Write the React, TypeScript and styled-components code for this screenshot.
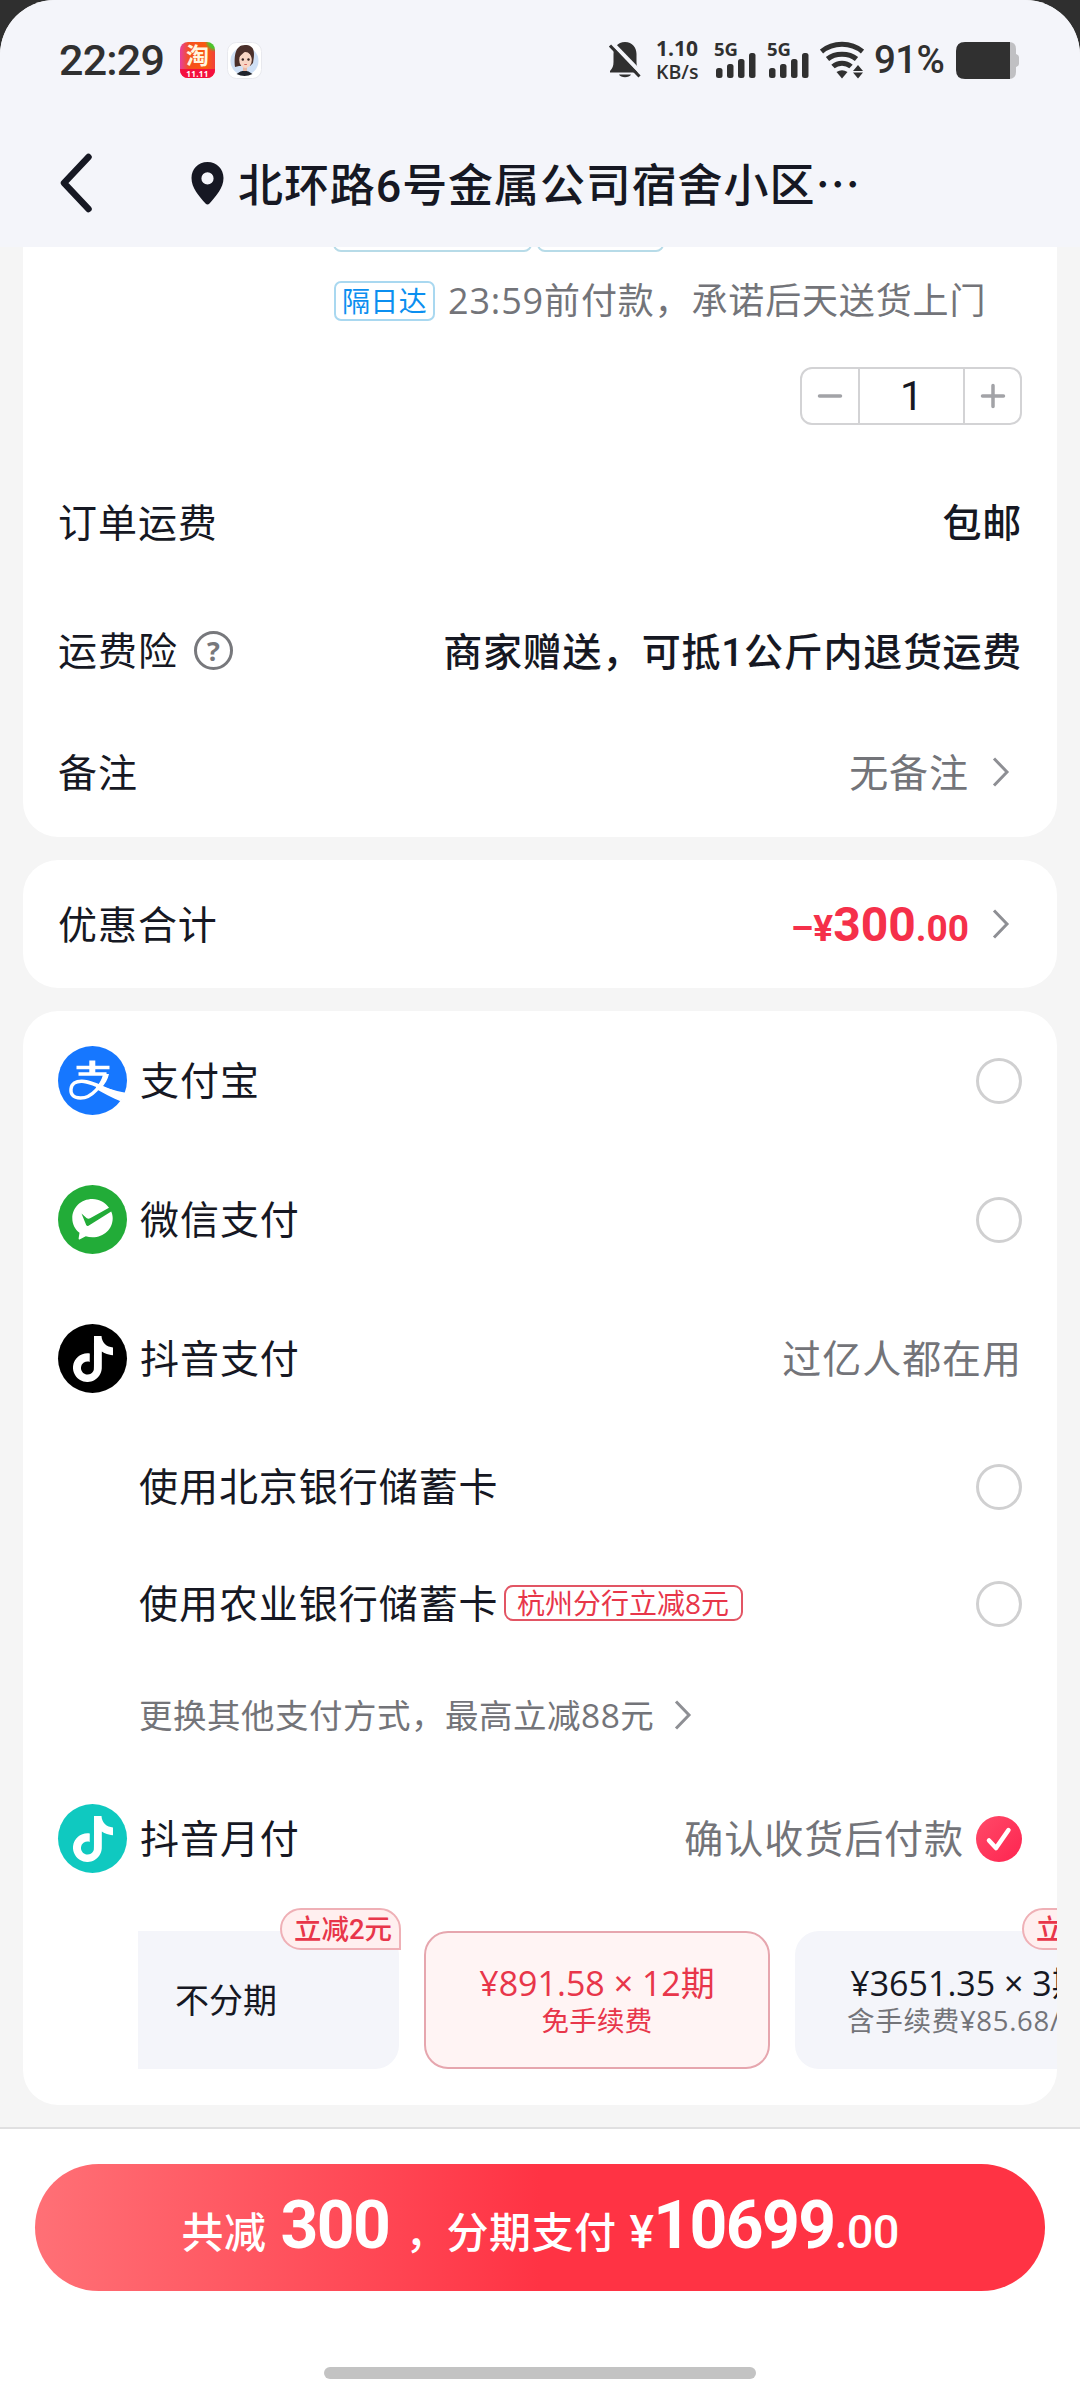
import React from 'react';
import styled, { createGlobalStyle } from 'styled-components';
import { SiTiktok } from 'react-icons/si';

const INK = '#161823';
const GREY = '#737479';
const RED = '#f5304a';

const Global = createGlobalStyle`
  * { box-sizing: border-box; }
  body { margin: 0; background: #2f2f2f; }
  #root { font-family: "Open Sans", "Noto Sans CJK SC", sans-serif; color: ${INK}; }
`;

const Screen = styled.div`
  width: 1080px;
  height: 2400px;
  display: flex;
  flex-direction: column;
  overflow: hidden;
  border-radius: 55px 55px 0 0;
  background: #f5f5f5;
`;

/* ---------- header ---------- */

const Header = styled.header`
  height: 247px;
  flex: none;
  display: flex;
  flex-direction: column;
  background: #f4f5fa;
`;

const StatusBar = styled.div`
  height: 119px;
  padding: 1px 60px 0 59px;
  display: flex;
  align-items: center;
  justify-content: space-between;
  color: #303030;
`;

const StatusGroup = styled.div`
  display: flex;
  align-items: center;
`;

const Clock = styled.span`
  font-family: Roboto, sans-serif;
  font-size: 43px;
  line-height: 48px;
  font-weight: 500;
  letter-spacing: -0.8px;
  width: 121px;
  white-space: nowrap;
`;

const ShopIcon = styled.div`
  width: 35px;
  height: 36px;
  margin-right: 12px;
  border-radius: 8px;
  display: flex;
  flex-direction: column;
  background: radial-gradient(circle at 100% 0, #4cc42c 0 12%, transparent 20%),
    linear-gradient(90deg, #e640a0 0, #f4501e 25%, #fb5a10 75%, #f0403a 100%);
  color: #fff6e0;
  font-size: 23px;
  font-weight: 700;
  line-height: 27px;
  text-align: center;
`;

const ShopStrip = styled.div`
  height: 9px;
  border-radius: 0 0 8px 8px;
  background: #f4103e;
  color: #fff;
  font-size: 8px;
  line-height: 9px;
  letter-spacing: 0.4px;
`;

const Speed = styled.div`
  width: 58px;
  margin-left: 14px;
  font-size: 21px;
  line-height: 23px;
  font-weight: 700;
  span { display: block; font-size: 19.5px; font-weight: 600; }
`;

const Signal = styled.div`
  width: 53px;
  height: 38px;
  display: flex;
  flex-direction: column;
  font-size: 18.5px;
  line-height: 15px;
  font-weight: 700;
  svg { margin-top: -6px; margin-left: 2px; }
`;

const Percent = styled.span`
  width: 82px;
  font-family: Roboto, sans-serif;
  font-size: 38.5px;
  line-height: 44px;
  font-weight: 500;
  letter-spacing: -0.6px;
  margin-left: 10px;
  white-space: nowrap;
`;

const TitleBar = styled.div`
  flex: 1;
  display: flex;
  align-items: center;
  padding: 0 60px;
`;

const Address = styled.div`
  display: flex;
  align-items: center;
  margin-left: 97px;
  gap: 14px;
  font-family: Roboto, "Noto Sans CJK SC", sans-serif;
  font-size: 45px;
  line-height: 60px;
  letter-spacing: 0.9px;
  font-weight: 500;
`;

const Dots = styled.span`
  font-family: "Noto Sans CJK SC", sans-serif;
`;

/* ---------- cards ---------- */

const Main = styled.main`
  flex: 1;
  padding: 0 23px;
  display: flex;
  flex-direction: column;
  gap: 23px;
  overflow: hidden;
`;

const Card = styled.section<{ $flatTop?: boolean }>`
  background: #fff;
  border-radius: ${p => (p.$flatTop ? '0 0 35px 35px' : '35px')};
  overflow: hidden;
  flex: none;
`;

const Row = styled.div<{ $h: number; $indent?: number; $top?: number }>`
  height: ${p => p.$h}px;
  padding: ${p => p.$top ?? 0}px 35px 0 ${p => p.$indent ?? 35}px;
  display: flex;
  align-items: center;
`;

const ClippedTags = styled.div`
  height: 5px;
  padding-left: 310px;
  display: flex;
  align-items: flex-end;
  gap: 5px;
  overflow: hidden;
`;

const ClippedTag = styled.div<{ $w: number }>`
  flex: none;
  width: ${p => p.$w}px;
  height: 39px;
  border: 2px solid #b7dbe8;
  border-radius: 8px;
`;

const Tag = styled.span<{ $tone: 'blue' | 'red' }>`
  display: flex;
  align-items: center;
  justify-content: center;
  font-size: 28px;
  ${p =>
    p.$tone === 'blue'
      ? 'width: 101px; height: 40px; color: #0b8ff0; border: 2px solid #a9d8f0; border-radius: 7px; margin-right: 13px; letter-spacing: 0.4px; line-height: 34px;'
      : 'width: 239px; height: 36px; color: #e8364a; border: 2px solid #e25564; border-radius: 9px; margin-left: 5px; line-height: 31px;'}
`;

const Label = styled.span<{ $bold?: boolean; $muted?: boolean }>`
  font-family: ${p => (p.$bold ? 'Roboto, "Noto Sans CJK SC", sans-serif' : 'inherit')};
  font-size: 39px;
  line-height: 54px;
  padding-bottom: ${p => (p.$bold ? 0 : 1)}px;
  padding-top: ${p => (p.$bold ? 4 : 0)}px;
  letter-spacing: ${p => (p.$bold ? 0.7 : 0.95)}px;
  white-space: nowrap;
  font-weight: ${p => (p.$bold ? 500 : 400)};
  color: ${p => (p.$muted ? GREY : INK)};
`;

const Note = styled.span<{ $size: number; $spacing?: number }>`
  font-size: ${p => p.$size}px;
  letter-spacing: ${p => p.$spacing ?? 0}px;
  line-height: 50px;
  color: ${GREY};
  white-space: nowrap;
`;

const Spacer = styled.span`
  flex: 1;
`;

const Stepper = styled.div`
  width: 222px;
  height: 58px;
  margin-top: 1px;
  display: grid;
  grid-template-columns: 56px 1fr 57px;
  border: 2px solid #d3d3d5;
  border-radius: 12px;
  font-family: Roboto, sans-serif;
  font-size: 41px;
  line-height: 54px;
  text-align: center;
`;

const StepCell = styled.span`
  display: flex;
  align-items: center;
  justify-content: center;
  & + & { border-left: 2px solid #d3d3d5; }
`;

const Discount = styled.span`
  display: flex;
  align-items: baseline;
  font-family: Roboto, sans-serif;
  color: ${RED};
  font-weight: 700;
  font-size: 36px;
  line-height: 56px;
  padding-top: 6px;
`;

const DiscountPart = styled.span<{ $size: number; $ml?: number }>`
  font-size: ${p => p.$size}px;
  margin-left: ${p => p.$ml ?? 0}px;
`;

const ChevronBox = styled.span<{ $gap: number; $right?: number }>`
  display: flex;
  margin-left: ${p => p.$gap}px;
  margin-right: ${p => p.$right ?? 0}px;
`;

const IconSlot = styled.span<{ $bg?: string }>`
  width: 69px;
  height: 69px;
  flex: none;
  border-radius: 50%;
  background: ${p => p.$bg ?? 'transparent'};
  color: #fff;
  display: flex;
  align-items: center;
  justify-content: center;
  margin-right: 13px;
`;

const Radio = styled.span`
  width: 46px;
  height: 46px;
  margin-top: 1px;
  border: 3px solid #d0d0d1;
  border-radius: 50%;
`;

const Checked = styled.span`
  width: 46px;
  height: 46px;
  margin-left: 12px;
  border-radius: 50%;
  background: linear-gradient(135deg, #ff4a68, #fe2450);
`;

/* ---------- instalment options ---------- */

const Plans = styled.div`
  margin: -2px 0 0 115px;
  height: 198px;
  padding-top: 24px;
  display: flex;
  gap: 25px;
  overflow: hidden;
`;

const Plan = styled.div<{ $active?: boolean; $scrolled?: boolean }>`
  position: relative;
  flex: none;
  width: 346px;
  height: 138px;
  margin-left: ${p => (p.$scrolled ? -85 : 0)}px;
  border-radius: 24px;
  display: flex;
  flex-direction: column;
  align-items: center;
  justify-content: center;
  background: ${p => (p.$active ? '#fff4f4' : '#f4f5fa')};
  border: 2px solid ${p => (p.$active ? '#e6a6ae' : 'transparent')};
  color: ${p => (p.$active ? '#e8364a' : INK)};
`;

const PlanTitle = styled.span`
  font-size: 34px;
  line-height: 41px;
  white-space: nowrap;
`;

const PlanNote = styled.span<{ $muted?: boolean }>`
  font-size: 27.5px;
  line-height: 34px;
  letter-spacing: ${p => (p.$muted ? 0.7 : 0.2)}px;
  white-space: nowrap;
  color: ${p => (p.$muted ? GREY : 'inherit')};
`;

const PlanBadge = styled.span`
  position: absolute;
  right: -4px;
  top: -25px;
  width: 121px;
  height: 42px;
  padding-left: 5px;
  border: 2px solid #efb0b6;
  border-radius: 21px 21px 0 21px;
  background: #ffefef;
  color: #e8364a;
  font-family: Roboto, "Noto Sans CJK SC", sans-serif;
  font-size: 27.5px;
  line-height: 40px;
  font-weight: 500;
  text-align: center;
  white-space: nowrap;
`;

/* ---------- footer ---------- */

const Footer = styled.footer`
  height: 273px;
  flex: none;
  background: #fff;
  border-top: 2px solid #e0e0e1;
  display: flex;
  flex-direction: column;
  align-items: center;
`;

const PayButton = styled.button`
  width: 1010px;
  height: 127px;
  margin-top: 35px;
  padding: 4px 0 0;
  border: 0;
  border-radius: 64px;
  background: linear-gradient(90deg, #ff7076 0%, #ff3344 50%, #ff3344 100%);
  color: #fff;
  display: flex;
  align-items: center;
  justify-content: center;
  font-family: Roboto, "Noto Sans CJK SC", sans-serif;
`;

const PayLine = styled.span`
  display: flex;
  align-items: baseline;
  font-size: 42px;
  line-height: 80px;
  font-weight: 500;
  letter-spacing: 0.5px;
  white-space: nowrap;
`;

const PayNum = styled.b<{ $size: number; $ml?: number }>`
  font-size: ${p => p.$size}px;
  font-weight: ${p => (p.$size > 60 ? 700 : 500)};
  margin-left: ${p => p.$ml ?? 0}px;
  letter-spacing: ${p => (p.$size > 60 ? -1.6 : -0.8)}px;
`;

const HomeBar = styled.div`
  width: 432px;
  height: 12px;
  margin-top: 76px;
  border-radius: 6px;
  background: #c3c3c3;
`;

/* ---------- drawings ---------- */

const Chevron = () => (
  <svg width="18" height="32" viewBox="0 0 18 32" fill="none" stroke="#8e8f94" strokeWidth="3">
    <path d="M2 2.5 15 16 2 29.5" />
  </svg>
);

const Avatar = () => (
  <svg width="35" height="37" viewBox="0 0 35 37">
    <rect x=".5" y=".5" width="34" height="36" rx="9" fill="#fff" stroke="#e8e9ee" />
    <circle cx="17.500" cy="19" r="14" fill="#cfe0f6" />
    <path d="M8 25C7 14 8 3 18 3s10 8 8 18l-3 3H12Z" fill="#4b302b" />
    <path d="M9.500 32q8-7 16 0-8 4-16 0Z" fill="#20242c" />
    <path d="M16 24h4v5h-4z" fill="#eab9a4" />
    <ellipse cx="18.500" cy="18" rx="6.300" ry="8" fill="#f8d6c5" />
    <path d="M11.500 16C13 13 17 12 19 7c2 3 5 5 6 9V9l-5-4-7 2Z" fill="#4b302b" />
    <circle cx="15.800" cy="17.500" r="1.200" fill="#33211f" />
    <circle cx="21.500" cy="17.500" r="1.200" fill="#33211f" />
    <path d="M17.300 22.500h2.600" stroke="#d4605c" strokeWidth="1.200" />
  </svg>
);

const BellOff = () => (
  <svg width="33" height="38" viewBox="0 0 33 38" fill="#303030">
    <path d="M16 1C8.500 1 4.500 7 4.500 13v8c0 4-1 6-3.500 9v1.500h30V30c-2.500-3-3.500-5-3.500-9v-8C27.500 7 23.500 1 16 1Z" />
    <path d="M10 33.500h12c-1.500 3.500-10.500 3.500-12 0Z" />
    <path d="M3 2 34 34" stroke="#f4f5fa" strokeWidth="4" />
    <path d="M1 4.500 30.500 35.500" stroke="#303030" strokeWidth="3" />
  </svg>
);

const Bars = () => (
  <svg width="42" height="29" viewBox="0 0 42 29" fill="#303030">
    <rect x="0" y="18" width="6.500" height="10" rx="2.500" />
    <rect x="11" y="14" width="6.500" height="14" rx="2.500" />
    <rect x="22" y="9" width="6.500" height="19" rx="2.500" />
    <rect x="33" y="3" width="6.500" height="25" rx="2.500" />
  </svg>
);

const Wifi = () => (
  <svg width="44" height="38" viewBox="0 0 44 38" fill="none" stroke="#303030" strokeWidth="5">
    <path d="M1.500 10.500C13 .8 31 .8 42.500 10.500" />
    <path d="M7.500 18C15 11.500 29 11.500 36.500 18" />
    <path d="M13 25.500C18 21 26 21 31 25.500" />
    <path d="M16.500 31Q22 27.500 27.500 31L22 37.500Z" fill="#303030" stroke="none" />
    <path d="M38 24l5 6H33Zm0 13.500 5-6H33Z" fill="#303030" stroke="none" />
  </svg>
);

const Battery = () => (
  <svg width="64" height="37" viewBox="0 0 64 37">
    <path d="M48 0h5q7 0 7 7v5q3 1 3 3v7q0 2-3 3v5q0 7-7 7h-5Z" fill="#c0c0c3" />
    <path d="M9 0h45v37H9q-9 0-9-9V9q0-9 9-9Z" fill="#303030" />
  </svg>
);

const Back = () => (
  <svg width="34" height="60" viewBox="0 0 34 60" fill="none" stroke={INK} strokeWidth="6.500" strokeLinecap="round" strokeLinejoin="round">
    <path d="M28.500 4 4 30l24.500 26" />
  </svg>
);

const Pin = () => (
  <svg width="33" height="43" viewBox="0 0 33 43" fill={INK}>
    <path fillRule="evenodd" d="M16.500 0C7 0 .5 7 .5 16 .5 26 8 34 14.500 41.500q2 2 4 0C25 34 32.500 26 32.500 16c0-9-6.500-16-16-16Zm0 22.500a6 6 0 1 1 0-12.200 6 6 0 0 1 0 12.200Z" />
  </svg>
);

const AddressText = styled.span`
  padding-top: 3px;
`;

const Help = styled.span`
  width: 39px;
  height: 39px;
  margin-left: 16px;
  border: 3px solid #77787c;
  border-radius: 50%;
  color: #77787c;
  font-size: 27px;
  line-height: 33px;
  font-weight: 700;
  text-align: center;
`;

const Alipay = () => (
  <svg width="69" height="69" viewBox="0 0 69 69" fill="none" stroke="#fff" strokeWidth="3.400">
    <circle cx="34.500" cy="34.500" r="34.500" fill="#1677ff" stroke="none" />
    <path d="M18.500 21.500h33M20.500 28h28" />
    <path d="M34.300 14.500V28" strokeWidth="6" />
    <path d="M47 27.500C44.500 39 34 52 22.500 52 14.500 52 12.500 47.500 13 43 13.500 37.500 18 35 24 35.200c9 .4 20 6.200 39 14.500" />
    <path d="M38 38c7 3 17 6.500 31 9l-6.500 8.300C54 51.500 46 47.500 38 43Z" fill="#fff" stroke="none" />
    <path d="M46 28h5C50 33 47 38 43.500 42l-3.500-3c3-3.500 5-7 6-11Z" fill="#fff" stroke="none" />
  </svg>
);

const WeChatPay = () => (
  <svg width="69" height="69" viewBox="0 0 69 69">
    <circle cx="34.500" cy="34.500" r="34.500" fill="#22ac38" />
    <path d="M34.500 14C23 14 14.300 22.500 14.300 33.200c0 6 2.700 11 7.200 14.600l-.9 5.700q0 1.400 1.400.8l5.800-3q3 1 6.700 1C46 52.300 54.700 43.800 54.700 33.200c0-2.500-.6-4.700-1.500-6.800L30.500 40.700q-1.500.8-2.300-.8L23.500 28.500 28.500 33q1.700 1.300 3.600.3L51 22.800C47.500 17.500 41.500 14 34.500 14Z" fill="#fff" />
  </svg>
);

const Tick = () => (
  <svg width="46" height="46" viewBox="0 0 46 46" fill="none" stroke="#fff" strokeWidth="4.500" strokeLinecap="round" strokeLinejoin="round">
    <path d="m13 24.500 7 7.500L32.500 14" />
  </svg>
);

const Minus = () => (
  <svg width="26" height="26" viewBox="0 0 26 26" stroke="#a2a3a7" strokeWidth="3.500" strokeLinecap="round">
    <path d="M2.500 13h21" />
  </svg>
);

const Plus = () => (
  <svg width="26" height="26" viewBox="0 0 26 26" stroke="#a2a3a7" strokeWidth="3.500" strokeLinecap="round">
    <path d="M2.500 13h21M13 2.500v21" />
  </svg>
);

const MobileSignal = () => (
  <Signal>
    5G
    <Bars />
  </Signal>
);

export default function App() {
  return (
    <>
      <Global />
      <Screen lang="zh-CN">
        <Header>
          <StatusBar>
            <StatusGroup>
              <Clock>22:29</Clock>
              <ShopIcon>
                淘<ShopStrip>11.11</ShopStrip>
              </ShopIcon>
              <Avatar />
            </StatusGroup>
            <StatusGroup>
              <BellOff />
              <Speed>
                1.10<span>KB/s</span>
              </Speed>
              <MobileSignal />
              <MobileSignal />
              <Wifi />
              <Percent>91%</Percent>
              <Battery />
            </StatusGroup>
          </StatusBar>
          <TitleBar>
            <Back />
            <Address>
              <Pin />
              <AddressText>
                北环路6号金属公司宿舍小区<Dots>…</Dots>
              </AddressText>
            </Address>
          </TitleBar>
        </Header>

        <Main>
          <Card $flatTop>
            <ClippedTags>
              <ClippedTag $w={199} />
              <ClippedTag $w={127} />
            </ClippedTags>
            <Row $h={97} $indent={311}>
              <Tag $tone="blue">隔日达</Tag>
              <Note $size={36} $spacing={0.85}>23:59前付款，承诺后天送货上门</Note>
            </Row>
            <Row $h={92}>
              <Spacer />
              <Stepper>
                <StepCell><Minus /></StepCell>
                <StepCell>1</StepCell>
                <StepCell><Plus /></StepCell>
              </Stepper>
            </Row>
            <Row $h={162}>
              <Label>订单运费</Label>
              <Spacer />
              <Label $bold>包邮</Label>
            </Row>
            <Row $h={95}>
              <Label>运费险</Label>
              <Help>?</Help>
              <Spacer />
              <Label $bold>商家赠送，可抵1公斤内退货运费</Label>
            </Row>
            <Row $h={139} $top={9}>
              <Label>备注</Label>
              <Spacer />
              <Label $muted>无备注</Label>
              <ChevronBox $gap={23} $right={12}><Chevron /></ChevronBox>
            </Row>
          </Card>

          <Card>
            <Row $h={128}>
              <Label>优惠合计</Label>
              <Spacer />
              <Discount>
                <DiscountPart $size={36}>–</DiscountPart>
                <DiscountPart $size={37}>¥</DiscountPart>
                <DiscountPart $size={48}>300</DiscountPart>
                <DiscountPart $size={37}>.00</DiscountPart>
              </Discount>
              <ChevronBox $gap={23} $right={12}><Chevron /></ChevronBox>
            </Row>
          </Card>

          <Card>
            <Row $h={139}>
              <IconSlot><Alipay /></IconSlot>
              <Label>支付宝</Label>
              <Spacer />
              <Radio />
            </Row>
            <Row $h={139}>
              <IconSlot><WeChatPay /></IconSlot>
              <Label>微信支付</Label>
              <Spacer />
              <Radio />
            </Row>
            <Row $h={139}>
              <IconSlot $bg="#000"><SiTiktok size={46} /></IconSlot>
              <Label>抖音支付</Label>
              <Spacer />
              <Label $muted>过亿人都在用</Label>
            </Row>
            <Row $h={116} $indent={116}>
              <Label>使用北京银行储蓄卡</Label>
              <Spacer />
              <Radio />
            </Row>
            <Row $h={118} $indent={116}>
              <Label>使用农业银行储蓄卡</Label>
              <Tag $tone="red">杭州分行立减8元</Tag>
              <Spacer />
              <Radio />
            </Row>
            <Row $h={106} $indent={116}>
              <Note $size={33.5} $spacing={0.5}>更换其他支付方式，最高立减88元</Note>
              <ChevronBox $gap={20}><Chevron /></ChevronBox>
            </Row>
            <Row $h={141}>
              <IconSlot $bg="#0fc9c0"><SiTiktok size={46} /></IconSlot>
              <Label>抖音月付</Label>
              <Spacer />
              <Label $muted>确认收货后付款</Label>
              <Checked><Tick /></Checked>
            </Row>
            <Plans>
              <Plan $scrolled>
                <PlanTitle>不分期</PlanTitle>
                <PlanBadge>立减2元</PlanBadge>
              </Plan>
              <Plan $active>
                <PlanTitle>¥891.58 × 12期</PlanTitle>
                <PlanNote>免手续费</PlanNote>
              </Plan>
              <Plan>
                <PlanTitle>¥3651.35 × 3期</PlanTitle>
                <PlanNote $muted>含手续费¥85.68/期</PlanNote>
                <PlanBadge>立减2元</PlanBadge>
              </Plan>
            </Plans>
          </Card>
        </Main>

        <Footer>
          <PayButton>
            <PayLine>
              共减
              <PayNum $size={66} $ml={14}>300</PayNum>
              <PayNum $size={42} $ml={16}>，</PayNum>
              分期支付
              <PayNum $size={46} $ml={13}>¥</PayNum>
              <PayNum $size={66}>10699</PayNum>
              <PayNum $size={47}>.00</PayNum>
            </PayLine>
          </PayButton>
          <HomeBar />
        </Footer>
      </Screen>
    </>
  );
}
